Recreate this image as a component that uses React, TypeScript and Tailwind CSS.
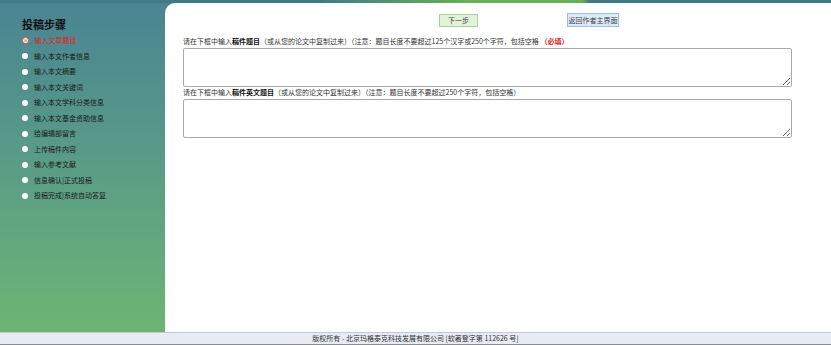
import React from 'react';

const steps = [
  '输入文章题目',
  '输入本文作者信息',
  '输入本文摘要',
  '输入本文关键词',
  '输入本文学科分类信息',
  '输入本文基金资助信息',
  '给编辑部留言',
  '上传稿件内容',
  '输入参考文献',
  '信息确认|正式投稿',
  '投稿完成|系统自动答复',
];

const font = { fontFamily: '"Noto Sans CJK SC", "Liberation Sans", sans-serif' };

export default function App() {
  return (
    <div
      className="w-[831px] h-[345px] flex flex-col overflow-hidden bg-gradient-to-b from-[#4a8492] to-[#6eb672] text-[#333]"
      style={font}
    >
      {/* top strip */}
      <div className="h-[3px] shrink-0 bg-[linear-gradient(to_right,#3f7a86_0%,#3f7a86_38%,#6bae58_56%,#6bae58_70%,#3f7a86_71%,#3f7a86_100%)]" />

      <div className="flex flex-1 min-h-0">
        {/* sidebar */}
        <div className="w-[165px] shrink-0 pl-[22px] pt-[14px]">
          <h2 className="text-[11px] font-bold text-[#111] leading-[14px] mb-[2px]">投稿步骤</h2>
          <ul className="flex flex-col">
            {steps.map((s, i) => (
              <li key={s} className="flex items-center h-[15.5px] text-[7px] leading-none">
                {i === 0 ? (
                  <span className="w-[7px] h-[7px] rounded-full bg-white border border-[#e05050] flex items-center justify-center mr-[6px] -ml-[0.5px]">
                    <span className="w-[3px] h-[3px] rounded-full bg-[#f0a0a0]" />
                  </span>
                ) : (
                  <span className="w-[6px] h-[6px] rounded-full bg-white mr-[6px]" />
                )}
                <span className={i === 0 ? 'text-[#e02020]' : 'text-[#1a1a1a]'}>{s}</span>
              </li>
            ))}
          </ul>
        </div>

        {/* main panel */}
        <div className="flex-1 bg-white rounded-tl-[10px] pt-[10px] text-[7px]">
          <div className="flex items-center pl-[274px] gap-[89px]">
            <button className="w-[39px] h-[13px] bg-[#e2f3da] border border-[#a8d49a] text-[#444] text-[7px] leading-none">
              下一步
            </button>
            <button className="w-[52px] h-[14px] bg-[#dcebf6] border border-[#9cc3de] text-[#444] text-[7px] leading-none">
              返回作者主界面
            </button>
          </div>

          <div className="pl-[18px] pr-[39px] mt-[9px]">
            <p className="leading-[10px] mb-[2px]">
              请在下框中输入<b className="text-[#111]">稿件题目</b>（或从您的论文中复制过来）（注意：题目长度不要超过125个汉字或250个字符，包括空格{' '}
              <b className="text-[#e02020]">（必填）</b>
            </p>
            <textarea className="block w-full h-[39px] border border-[#aaa] rounded-[2px] outline-none" />
            <p className="leading-[10px] mb-[2px]">
              请在下框中输入<b className="text-[#111]">稿件英文题目</b>（或从您的论文中复制过来）（注意：题目长度不要超过250个字符，包括空格）
            </p>
            <textarea className="block w-full h-[39px] border border-[#aaa] rounded-[2px] outline-none" />
          </div>
        </div>
      </div>

      {/* footer */}
      <div className="h-[13px] shrink-0 bg-[#e7ebf4] border-t border-[#c4c8cf] border-b border-b-[#8a8d92] flex items-center justify-center text-[7px] text-[#333] leading-none">
        版权所有 - 北京玛格泰克科技发展有限公司 [软著登字第 112626 号]
      </div>
    </div>
  );
}
